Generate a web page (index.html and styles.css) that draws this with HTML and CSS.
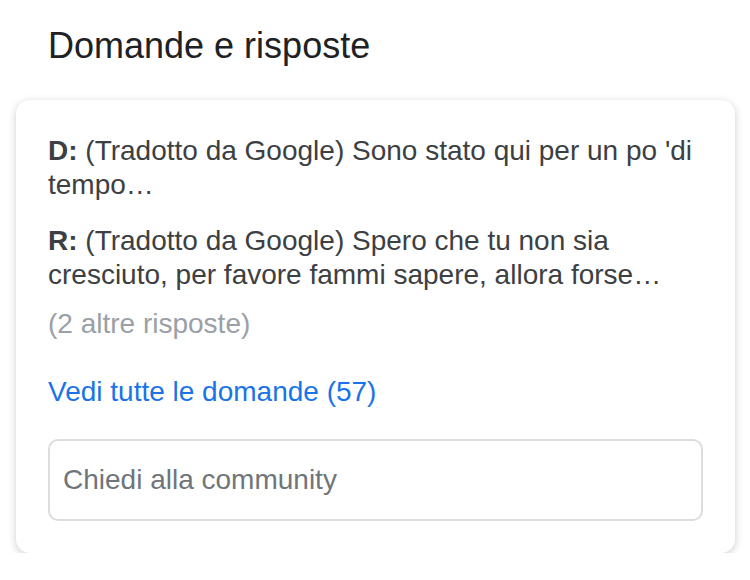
FILE: index.html
```html
<!DOCTYPE html>
<html lang="it">
<head>
<meta charset="utf-8">
<title>Domande e risposte</title>
<link rel="stylesheet" href="styles.css">
</head>
<body>
<h2 class="title">Domande e risposte</h2>
<div class="card">
  <p class="qa"><b>D:</b> (Tradotto da Google) Sono stato qui per un po 'di tempo…</p>
  <p class="qa answer"><b>R:</b> (Tradotto da Google) Spero che tu non sia cresciuto, per favore fammi sapere, allora forse…</p>
  <p class="more">(2 altre risposte)</p>
  <a class="link" href="#">Vedi tutte le domande (57)</a>
  <div class="ask">Chiedi alla community</div>
</div>
</body>
</html>
```

FILE: styles.css
```css
html, body {
  margin: 0;
  padding: 0;
  background: #fff;
}
body {
  font-family: "Liberation Sans", Arial, sans-serif;
  color: #3c4043;
}
.title {
  margin: 0;
  padding: 24px 48px 0;
  font-size: 36px;
  font-weight: normal;
  line-height: 44px;
  color: #202124;
}
.card {
  margin: 32px 15px 0 16px;
  padding: 34px 32px 32px;
  background: #fff;
  border-radius: 14px;
  box-shadow: 0 2px 8px rgba(0, 0, 0, 0.2);
  display: flex;
  flex-direction: column;
  align-items: flex-start;
}
.qa {
  margin: 0;
  font-size: 28px;
  line-height: 34px;
}
.qa b {
  font-weight: bold;
}
.answer {
  margin-top: 22px;
}
.more {
  margin: 15px 0 0;
  font-size: 28px;
  line-height: 34px;
  color: #9aa0a6;
}
.link {
  margin-top: 34px;
  font-size: 28px;
  line-height: 34px;
  color: #1a73e8;
  text-decoration: none;
}
.ask {
  align-self: stretch;
  margin-top: 30px;
  height: 78px;
  border: 2px solid #dddddd;
  border-radius: 10px;
  padding: 0 13px;
  display: flex;
  align-items: center;
  font-size: 28px;
  color: #70757a;
}
```
